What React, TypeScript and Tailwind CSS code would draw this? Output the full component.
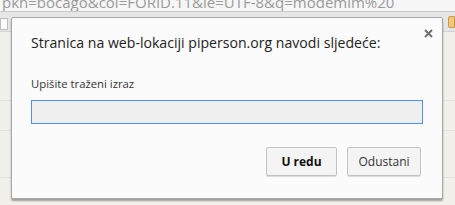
export default function App() {
  return (
    <div
      className="relative w-[455px] h-[205px] overflow-hidden bg-[#f2f0ea]"
      style={{ fontFamily: '"Open Sans", "Noto Sans", sans-serif' }}
    >
      {/* page behind the dialog */}
      <div className="h-[12px] bg-[#f6f6f6] border-b border-[#c9c9c9] overflow-hidden">
        <div className="text-[15px] leading-[10px] text-[#9a9a9a] pl-[2px] -mt-[3px] whitespace-nowrap">
          pkn=bocago&amp;col=FORID.11&amp;ie=UTF-8&amp;q=modemim%20
        </div>
      </div>
      <div className="h-[20px] bg-[#e6e6e6] border-b border-[#d4d4d4] flex items-end justify-between">
        <div className="w-[8px] h-[12px] bg-[#fafafa] border border-[#bdbdbd] mb-[1px]" />
        <div className="w-[7px] h-[12px] bg-[#f3c778] border border-[#c89a4a] rounded-l-[2px] mb-[3px]" />
      </div>
      <div className="mt-[68px] border-t border-[#e6e3dc]" />
      <div className="mt-[29px] border-t border-[#e6e3dc]" />
      <div className="mt-[46px] border-t border-[#e6e3dc]" />

      {/* dialog */}
      <div className="absolute left-[11px] top-[17px] w-[432px] h-[182px] bg-[#fbfbfb] border border-[#a8a8a8] rounded-[2px] shadow-[0_2px_2px_rgba(0,0,0,0.35)] flex flex-col px-[19px]">
        <svg width="9" height="9" viewBox="0 0 9 9" className="absolute left-[412px] top-[11px]">
          <path d="M1 1L8 8M8 1L1 8" stroke="#6f6f6f" strokeWidth="2" />
        </svg>
        <div className="pt-[15px] text-[14.1px] leading-[20px] text-[#222]">
          Stranica na web-lokaciji piperson.org navodi sljedeće:
        </div>
        <div className="mt-[23px] text-[11.3px] leading-[16px] text-[#333]">
          Upišite traženi izraz
        </div>
        <div className="mt-[8px] h-[24px] w-[392px] bg-[#efefef] border border-[#4d90fe]" />
        <div className="flex justify-end gap-[10px] mt-[23px] pr-[2px]">
          <button className="w-[71px] h-[29px] bg-[#f4f4f4] border border-[#c3c3c3] rounded-[2px] shadow-[0_1px_0_rgba(0,0,0,0.12)] text-[12px] font-bold text-[#111]">
            U redu
          </button>
          <button className="w-[74px] h-[29px] bg-[#f4f4f4] border border-[#c3c3c3] rounded-[2px] shadow-[0_1px_0_rgba(0,0,0,0.12)] text-[12px] text-[#333]">
            Odustani
          </button>
        </div>
      </div>
    </div>
  );
}
